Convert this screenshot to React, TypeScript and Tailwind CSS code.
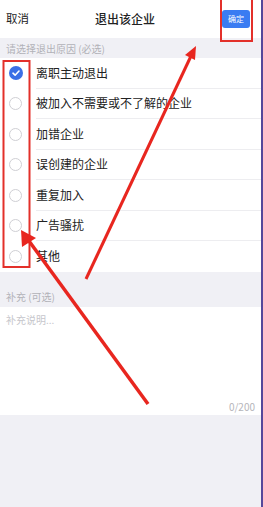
import React from 'react';

const reasons = [
  '离职主动退出',
  '被加入不需要或不了解的企业',
  '加错企业',
  '误创建的企业',
  '重复加入',
  '广告骚扰',
  '其他',
];

export default function App() {
  const selected = 0;

  return (
    <div
      className="relative w-[263px] h-[507px] overflow-hidden bg-[#f0f0f5] border-r-2 border-[#55479a] flex flex-col"
      style={{ fontFamily: '"Noto Sans CJK SC", "Noto Sans", sans-serif' }}
    >
      {/* 顶部栏 */}
      <div className="h-[38px] bg-white flex items-center pl-[6px] pr-[11px]">
        <span className="w-[60px] text-[11.5px] text-[#222]">取消</span>
        <span className="flex-1 text-center text-[12px] font-medium text-[#222] pr-[6px]">退出该企业</span>
        <div className="w-[60px] flex justify-end">
          <button className="w-[28px] h-[18px] rounded-[3px] bg-[#3a7cf2] text-white text-[8px] leading-none flex items-center justify-center">
            确定
          </button>
        </div>
      </div>

      {/* 必选原因 */}
      <div className="h-[20px] flex items-center pl-[6px] text-[10px] text-[#b2b2b8]">
        请选择退出原因 (必选)
      </div>
      <div className="bg-white">
        {reasons.map((r, i) => (
          <div key={r} className="h-[30.5px] flex items-center">
            <div className="w-[36px] flex justify-center pr-[5px]">
              {i === selected ? <Checked /> : <span className="w-[13px] h-[13px] rounded-full border border-[#cfcfd4]" />}
            </div>
            <div
              className={
                'flex-1 h-full flex items-center text-[12px] text-[#222] ' +
                (i < reasons.length - 1 ? 'border-b border-[#ededf0]' : '')
              }
            >
              {r}
            </div>
          </div>
        ))}
      </div>

      {/* 补充说明 */}
      <div className="h-[35px] flex items-end pb-[3px] pl-[6px] text-[10px] text-[#b2b2b8]">补充 (可选)</div>
      <div className="h-[108px] bg-white flex flex-col justify-between px-[6px] pt-[5px] pb-[1px]">
        <span className="text-[10px] text-[#c6c6cb]">补充说明...</span>
        <span className="self-end text-[10px] text-[#b5b5ba]">0/200</span>
      </div>

      {/* 标注 */}
      <svg className="absolute inset-0 pointer-events-none" width="263" height="507" viewBox="0 0 263 507">
        <rect x="221" y="-2" width="31" height="43" fill="none" stroke="#e3302a" strokeWidth="2" />
        <rect x="3.5" y="61" width="26" height="206" fill="none" stroke="#e3302a" strokeWidth="2" />
        <line x1="86" y1="279" x2="191" y2="56" stroke="#e8261f" strokeWidth="3" />
        <polygon points="196,46 185,55 195,60" fill="#e8261f" />
        <line x1="148" y1="404" x2="29" y2="241" stroke="#e8261f" strokeWidth="3.5" />
        <polygon points="21,230 22,247 36,238" fill="#e8261f" />
      </svg>
    </div>
  );
}

function Checked() {
  return (
    <svg width="14" height="14" viewBox="0 0 14 14">
      <circle cx="7" cy="7" r="7" fill="#3a6fe6" />
      <path d="M4 7.2 L6.1 9.2 L10 5" fill="none" stroke="#fff" strokeWidth="1.6" strokeLinecap="round" strokeLinejoin="round" />
    </svg>
  );
}
